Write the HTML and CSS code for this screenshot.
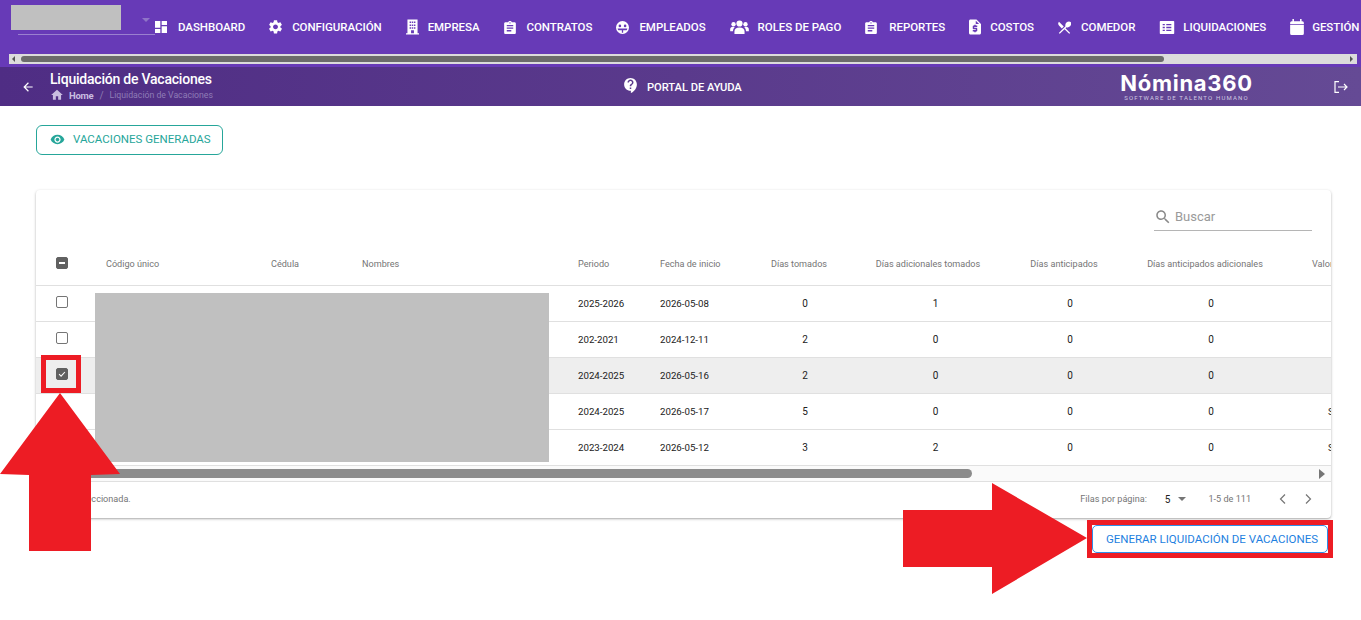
FILE: index.html
```html
<!DOCTYPE html>
<html lang="es">
<head>
<meta charset="utf-8">
<title>Liquidación de Vacaciones</title>
<link rel="stylesheet" href="styles.css">
</head>
<body>
<header class="topbar">
  <div class="topnav">
    <div class="company-select"><span class="select-caret"></span></div>
    <a class="nav-item"><svg class="nav-icon i-dash" viewBox="3 3 18 18"><path d="M3 13h8V3H3v10zm0 8h8v-6H3v6zm10 0h8V11h-8v10zm0-18v6h8V3h-8z"/></svg>DASHBOARD</a>
    <a class="nav-item"><svg class="nav-icon i-gear" viewBox="2.500 2 19 20"><path d="M19.140 12.940c.04-.3.06-.61.06-.94 0-.32-.02-.64-.07-.94l2.030-1.580c.18-.14.23-.41.12-.61l-1.920-3.320c-.12-.22-.37-.29-.59-.22l-2.390.96c-.5-.38-1.030-.7-1.620-.94l-.36-2.540c-.04-.24-.24-.41-.48-.41h-3.840c-.24 0-.43.17-.47.41l-.36 2.540c-.59.24-1.130.57-1.620.94l-2.390-.96c-.22-.08-.47 0-.59.22L2.740 8.870c-.12.21-.08.47.12.61l2.030 1.580c-.05.3-.09.63-.09.94s.02.64.07.94l-2.030 1.580c-.18.14-.23.41-.12.61l1.920 3.320c.12.22.37.29.59.22l2.390-.96c.5.38 1.030.7 1.620.94l.36 2.540c.05.24.24.41.48.41h3.840c.24 0 .44-.17.47-.41l.36-2.540c.59-.24 1.130-.56 1.620-.94l2.390.96c.22.08.47 0 .59-.22l1.920-3.320c.12-.22.07-.47-.12-.61l-2.010-1.580zM12 15.600c-1.980 0-3.600-1.620-3.600-3.600s1.620-3.600 3.600-3.600 3.600 1.620 3.600 3.600-1.620 3.600-3.600 3.600z"/></svg>CONFIGURACIÓN</a>
    <a class="nav-item"><svg class="nav-icon i-build" viewBox="3 2 18 21"><path fill-rule="evenodd" d="M5 2h14v19h2v2H3v-2h2zM8 5v2h2V5zm3 0v2h2V5zm3 0v2h2V5zM8 9v2h2V9zm3 0v2h2V9zm3 0v2h2V9zM8 13v2h2v-2zm3 0v2h2v-2zm3 0v2h2v-2zm-4 4v4h4v-4z"/></svg>EMPRESA</a>
    <a class="nav-item"><svg class="nav-icon i-clip" viewBox="3 1 18 20"><path d="M19 3h-4.180C14.400 1.840 13.300 1 12 1c-1.300 0-2.400.84-2.820 2H5c-1.100 0-2 .9-2 2v14c0 1.100.9 2 2 2h14c1.100 0 2-.9 2-2V5c0-1.100-.9-2-2-2zm-7 0c.55 0 1 .45 1 1s-.45 1-1 1-1-.45-1-1 .45-1 1-1zm2 14H7v-2h7v2zm3-4H7v-2h10v2zm0-4H7V7h10v2z"/></svg>CONTRATOS</a>
    <a class="nav-item"><svg class="nav-icon i-face" viewBox="2 2 20 20"><path fill-rule="evenodd" d="M12 2a10 10 0 100 20 10 10 0 000-20zM8 7.500a2 2 0 110 4 2 2 0 010-4zm8 0a2 2 0 110 4 2 2 0 010-4zM4.500 13.500h15c-.2 1-.6 1.800-1.200 2.600H13v4h-2v-4H5.700c-.6-.8-1-1.600-1.200-2.600z"/></svg>EMPLEADOS</a>
    <a class="nav-item"><svg class="nav-icon i-group" viewBox="0 2 24 18"><circle cx="12" cy="6.500" r="4"/><circle cx="4.300" cy="7.500" r="2.800"/><circle cx="19.700" cy="7.500" r="2.800"/><path d="M5.500 20v-3.500c0-3 2.500-5 6.500-5s6.500 2 6.500 5V20zM0 16.500v-2.500c0-2 1.400-3.300 3.500-3.300 1 0 1.800.3 2.400.7-1.300 1-2.100 2.400-2.300 5.100zM24 16.500v-2.500c0-2-1.400-3.300-3.500-3.300-1 0-1.800.3-2.400.7 1.300 1 2.100 2.400 2.300 5.100z"/></svg>ROLES DE PAGO</a>
    <a class="nav-item"><svg class="nav-icon i-clip i-clip-wide" viewBox="3 1 18 20"><path d="M19 3h-4.180C14.400 1.840 13.300 1 12 1c-1.300 0-2.400.84-2.820 2H5c-1.100 0-2 .9-2 2v14c0 1.100.9 2 2 2h14c1.100 0 2-.9 2-2V5c0-1.100-.9-2-2-2zm-7 0c.55 0 1 .45 1 1s-.45 1-1 1-1-.45-1-1 .45-1 1-1zm2 14H7v-2h7v2zm3-4H7v-2h10v2zm0-4H7V7h10v2z"/></svg>REPORTES</a>
    <a class="nav-item"><svg class="nav-icon i-cost" viewBox="4 2 16 20"><path d="M14 2H6c-1.100 0-1.990.9-1.990 2L4 20c0 1.100.89 2 1.990 2H18c1.100 0 2-.9 2-2V8l-6-6zm1 10h-4v1h3c.55 0 1 .45 1 1v3c0 .55-.45 1-1 1h-1v1h-2v-1H9v-2h4v-1h-3c-.55 0-1-.45-1-1v-3c0-.55.45-1 1-1h1V9h2v1h2v2zm-2-4V3.500L17.500 8H13z"/></svg>COSTOS</a>
    <a class="nav-item"><svg class="nav-icon i-food" viewBox="2.500 2.500 19 19"><path d="M8.100 13.340l2.830-2.830L3.910 3.500c-1.560 1.560-1.560 4.090 0 5.660l4.190 4.180zm6.780-1.810c1.530.71 3.680.21 5.270-1.380 1.910-1.910 2.280-4.650.81-6.120-1.460-1.460-4.200-1.100-6.120.81-1.590 1.590-2.090 3.740-1.380 5.270L3.700 19.870l1.410 1.410L12 14.410l6.880 6.880 1.410-1.410L13.410 13l1.470-1.470z"/></svg>COMEDOR</a>
    <a class="nav-item"><svg class="nav-icon i-list" viewBox="2 3 20 18"><path d="M21 3H3a1 1 0 00-1 1v16a1 1 0 001 1h18a1 1 0 001-1V4a1 1 0 00-1-1zM9 17H6v-2h3zm0-4H6v-2h3zm0-4H6V7h3zm9 8h-7v-2h7zm0-4h-7v-2h7zm0-4h-7V7h7z"/></svg>LIQUIDACIONES</a>
    <a class="nav-item"><svg class="nav-icon i-cal" viewBox="3 1 18 21"><path d="M6 1h2v3h8V1h2v3h1a2 2 0 012 2v2H3V6a2 2 0 012-2h1zM3 9h18v11a2 2 0 01-2 2H5a2 2 0 01-2-2z"/></svg>GESTIÓN DE TURNOS</a>
  </div>
  <div class="top-scroll">
    <span class="arrow-left"></span>
    <span class="top-thumb"></span>
    <span class="arrow-right"></span>
  </div>
</header>

<section class="pagebar">
  <div class="back"><svg class="back-icon" viewBox="0 0 24 24"><path d="M20 11H7.830l5.590-5.590L12 4l-8 8 8 8 1.410-1.410L7.830 13H20v-2z"/></svg></div>
  <div class="title-block">
    <h1 class="page-title">Liquidación de Vacaciones</h1>
    <div class="crumbs">
      <svg class="home-icon" viewBox="0 0 24 24"><path d="M10 20v-6h4v6h5v-8h3L12 3 2 12h3v8z"/></svg>
      <span class="crumb-home">Home</span><span class="crumb-sep">/</span><span class="crumb-current">Liquidación de Vacaciones</span>
    </div>
  </div>
  <a class="help-link"><svg class="help-icon" viewBox="3 2 17 20"><path d="M11.500 2C6.810 2 3 5.810 3 10.500S6.810 19 11.500 19h.5v3c4.860-2.340 8-7 8-11.500C20 5.810 16.190 2 11.500 2zm1 14.500h-2v-2h2v2zm0-3.500h-2c0-3.250 3-3 3-5 0-1.100-.9-2-2-2s-2 .9-2 2h-2c0-2.210 1.790-4 4-4s4 1.790 4 4c0 2.500-3 2.750-3 5z"/></svg>PORTAL DE AYUDA</a>
  <div class="brand-zone">
    <div class="brand"><div class="brand-name">Nómina360</div><div class="brand-sub">SOFTWARE DE TALENTO HUMANO</div></div>
    <svg class="exit-icon" viewBox="0 0 14 12"><path d="M5 .7H1v10.600h4M4 6h9M10 3l3 3-3 3"/></svg>
  </div>
</section>

<main class="content">
  <a class="btn-generated"><svg class="eye-icon" viewBox="0 0 24 24"><path d="M12 4.500C7 4.500 2.730 7.610 1 12c1.730 4.390 6 7.500 11 7.500s9.270-3.110 11-7.500c-1.730-4.390-6-7.500-11-7.500zM12 17c-2.760 0-5-2.240-5-5s2.240-5 5-5 5 2.240 5 5-2.240 5-5 5zm0-8c-1.660 0-3 1.340-3 3s1.340 3 3 3 3-1.340 3-3-1.340-3-3-3z"/></svg>VACACIONES GENERADAS</a>

  <div class="card">
    <div class="toolbar">
      <div class="search">
        <svg class="search-icon" viewBox="0 0 24 24"><path d="M15.500 14h-.79l-.28-.27C15.410 12.590 16 11.110 16 9.500 16 5.910 13.090 3 9.500 3S3 5.910 3 9.500 5.910 16 9.500 16c1.610 0 3.090-.59 4.230-1.570l.27.28v.79l5 4.990L20.490 19l-4.990-5zm-6 0C7.010 14 5 11.990 5 9.500S7.010 5 9.500 5 14 7.010 14 9.500 11.990 14 9.500 14z"/></svg>
        <span class="search-text">Buscar</span>
      </div>
    </div>
    <div class="table-clip">
      <table class="grid">
        <colgroup>
          <col class="c-check"><col class="c-code"><col class="c-ced"><col class="c-name"><col class="c-per"><col class="c-date"><col class="c-d1"><col class="c-d2"><col class="c-d3"><col class="c-d4"><col class="c-val">
        </colgroup>
        <thead>
          <tr>
            <th class="cell-check"><span class="box box-filled"><span class="minus"></span></span></th>
            <th>Código único</th><th>Cédula</th><th>Nombres</th><th>Periodo</th><th>Fecha de inicio</th>
            <th class="num">Días tomados</th><th class="num th-wide">Días adicionales tomados</th><th class="num">Días anticipados</th><th class="num">Días anticipados adicionales</th><th class="th-val">Valor</th>
          </tr>
        </thead>
        <tbody>
          <tr><td class="cell-check"><span class="box"></span></td><td></td><td></td><td></td><td>2025-2026</td><td>2026-05-08</td><td class="num">0</td><td class="num">1</td><td class="num">0</td><td class="num">0</td><td class="val"></td></tr>
          <tr><td class="cell-check"><span class="box"></span></td><td></td><td></td><td></td><td>202-2021</td><td>2024-12-11</td><td class="num">2</td><td class="num">0</td><td class="num">0</td><td class="num">0</td><td class="val"></td></tr>
          <tr class="selected"><td class="cell-check"><span class="box box-filled"><svg class="tick" viewBox="0 0 12 12"><path d="M2.500 6.200l2.400 2.400 4.600-5"/></svg></span></td><td></td><td></td><td></td><td>2024-2025</td><td>2026-05-16</td><td class="num">2</td><td class="num">0</td><td class="num">0</td><td class="num">0</td><td class="val"></td></tr>
          <tr><td class="cell-check"></td><td></td><td></td><td></td><td>2024-2025</td><td>2026-05-17</td><td class="num">5</td><td class="num">0</td><td class="num">0</td><td class="num">0</td><td class="val">S/ 0,00</td></tr>
          <tr><td class="cell-check"></td><td></td><td></td><td></td><td>2023-2024</td><td>2026-05-12</td><td class="num">3</td><td class="num">2</td><td class="num">0</td><td class="num">0</td><td class="val">S/ 0,00</td></tr>
        </tbody>
      </table>
    </div>
    <div class="table-scroll">
      <span class="table-thumb"></span>
      <span class="table-arrow"></span>
    </div>
    <div class="pager">
      <span class="selected-count">1 fila seleccionada.</span>
      <span class="rows-label">Filas por página:</span>
      <span class="rows-value">5</span>
      <span class="rows-caret"></span>
      <span class="range">1-5 de 111</span>
      <svg class="chev chev-prev" viewBox="0 0 10 12"><path d="M7 1.500L2.500 6 7 10.500"/></svg>
      <svg class="chev" viewBox="0 0 10 12"><path d="M3 1.500L7.500 6 3 10.500"/></svg>
    </div>
  </div>

  <div class="actions"><a class="btn-generate">GENERAR LIQUIDACIÓN DE VACACIONES</a></div>
</main>

<div class="redact redact-logo"></div>
<div class="redact redact-table"></div>
<svg class="annotations" viewBox="0 0 1361 620">
  <rect class="mark-box" x="43.500" y="357.500" width="35" height="33"/>
  <rect class="mark-box" x="1089.500" y="522.500" width="241" height="33"/>
  <polygon class="mark-arrow" points="60,393 120,474 91,475 91,551 29,551 29,475 0,474"/>
  <polygon class="mark-arrow" points="903,510 992,510 992,483 1087,538 992,594 992,567 903,567"/>
</svg>
</body>
</html>
```

FILE: styles.css
```css
* { box-sizing: border-box; }
html, body { margin: 0; padding: 0; height: 620px; overflow: hidden; background: #fff; }
body { font-family: Roboto, "Liberation Sans", sans-serif; color: #212121; position: relative; }

/* top nav */
.topbar { height: 67px; background: #673ab7; overflow: hidden; }
.topnav { height: 54px; display: flex; align-items: center; white-space: nowrap; overflow: hidden; }
.company-select { flex: 0 0 137px; height: 35px; margin-left: 18px; border-bottom: 1px solid #9a80cf; position: relative; align-self: flex-start; }
.select-caret { position: absolute; right: 5px; top: 18px; border: 4.500px solid transparent; border-top: 4.500px solid #8f74c8; border-bottom: 0; }
.nav-item { display: flex; align-items: center; flex: none; margin-right: 24px; font-size: 11.500px; font-weight: 500; color: #fff; letter-spacing: -.05px; }
.nav-icon { fill: #fff; flex: none; width: 13px; height: 13px; margin-right: 10px; }
.i-dash { width: 12px; height: 12px; margin-right: 11px; }
.i-gear { width: 13px; height: 13.700px; }
.i-build { width: 13px; height: 16px; margin-right: 9px; }
.i-clip { width: 12px; height: 13px; margin-right: 11px; }
.i-clip-wide { margin-right: 12px; }
.i-group { width: 19px; height: 14px; margin-right: 9px; }
.i-cost { width: 12px; height: 16px; margin-right: 9px; }
.i-list { width: 16px; height: 13px; margin-right: 8px; }
.i-cal { width: 14px; height: 16px; margin-right: 8px; }
.top-scroll { height: 10px; margin: 0 4px 0 9px; background: #dcdcdc; display: flex; align-items: center; padding: 0 4px 0 3px; }
.arrow-left { border: 3px solid transparent; border-right: 3px solid #555; border-left: 0; margin-right: 6px; }
.top-thumb { width: 1143px; height: 6px; background: #6b6b6b; border-radius: 3px; }
.arrow-right { margin-left: auto; border: 3px solid transparent; border-left: 3px solid #555; border-right: 0; }

/* page bar */
.pagebar { height: 39px; background: linear-gradient(90deg, #4f2d84 0%, #5a3a8c 50%, #654a95 100%); color: #fff; display: grid; grid-template-columns: 50px 574px 496px 1fr; align-items: center; }
.back { display: flex; justify-content: flex-end; padding-right: 15px; padding-top: 1px; }
.back-icon { width: 14px; height: 14px; fill: #fff; }
.title-block { display: flex; flex-direction: column; gap: 1px; padding-bottom: 1px; }
.page-title { margin: 0; font-size: 14px; line-height: 17px; font-weight: 500; color: #fff; letter-spacing: -.22px; }
.crumbs { display: flex; align-items: center; height: 12px; font-size: 8.700px; color: #9d8bbf; }
.home-icon { width: 14px; height: 14px; fill: #c9bde0; margin-right: 5px; }
.crumb-home { font-weight: 700; color: #c9bde0; font-size: 9.500px; letter-spacing: -.25px; }
.crumb-sep { margin: 0 6px; font-size: 10px; color: #8e7cb3; }
.crumb-current { color: #8f7cb6; }
.help-link { display: flex; align-items: center; gap: 10px; font-size: 11.200px; font-weight: 500; color: #fff; letter-spacing: -.05px; padding-top: 1px; }
.help-icon { width: 13px; height: 15px; fill: #fff; margin-top: -3px; }
.brand-zone { display: flex; justify-content: space-between; align-items: center; padding-right: 13px; }
.brand { width: 133px; color: #fff; text-align: center; }
.brand-name { font-family: Inter, "Open Sans", sans-serif; font-weight: 700; font-size: 22px; line-height: 22px; letter-spacing: .7px; white-space: nowrap; }
.brand-sub { font-size: 6px; line-height: 8px; color: #cfc6e0; letter-spacing: 1.170px; white-space: nowrap; }
.exit-icon { width: 14px; height: 12px; fill: none; stroke: #fff; stroke-width: 1.200; }

/* content */
.content { padding: 19px 30px 0 36px; }
.btn-generated { display: inline-flex; align-items: center; gap: 8px; height: 30px; width: 187px; padding: 0 0 2px 13px; border: 1px solid #26a69a; border-radius: 6px; font-size: 11.500px; color: #26a69a; vertical-align: top; }
.eye-icon { width: 15px; height: 15px; fill: #26a69a; flex: none; }
.card { margin-top: 35px; height: 328px; background: #fff; border-radius: 4px; box-shadow: 0 1px 3px rgba(0,0,0,.28), 0 1px 1px rgba(0,0,0,.08); overflow: hidden; }
.toolbar { height: 52px; display: flex; justify-content: flex-end; padding: 10px 19px 0 0; }
.search { width: 158px; height: 31px; display: flex; align-items: center; gap: 3px; padding: 3px 0 0 0; border-bottom: 1px solid #b5b5b5; }
.search-icon { width: 18px; height: 18px; fill: #8a8a8a; }
.search-text { font-size: 13px; color: #9a9a9a; }

.table-clip { width: 1295px; height: 224px; overflow: hidden; }
.grid { border-collapse: collapse; table-layout: fixed; width: 1346px; font-size: 9.700px; }
.c-check { width: 54px; } .c-code { width: 165px; } .c-ced { width: 91px; } .c-name { width: 216px; } .c-per { width: 82px; } .c-date { width: 111px; }
.c-d1 { width: 100px; } .c-d2 { width: 161px; } .c-d3 { width: 108px; } .c-d4 { width: 174px; } .c-val { width: 84px; }
.grid th { height: 43px; padding: 2px 0 0 16px; text-align: left; font-weight: 400; color: #757575; font-size: 9.100px; white-space: nowrap; border-bottom: 1px solid #e0e0e0; overflow: hidden; }
.grid td { height: 36px; padding: 0 0 0 16px; color: #212121; white-space: nowrap; border-bottom: 1px solid #e0e0e0; overflow: hidden; }
.grid th.num { padding: 2px 12px 0 0; text-align: center; }
.grid th.th-wide { padding-right: 15px; }
.grid th.th-val { padding-left: 14px; }
.grid td.num { padding: 0; text-align: center; font-size: 10px; }
.grid td.val { padding-left: 30px; }
.grid .cell-check { padding: 0 0 3px 20px; }
.grid th.cell-check { padding-bottom: 0; }
.selected td { background: #eee; }

.box { display: flex; align-items: center; justify-content: center; width: 12px; height: 12px; border: 1.500px solid #757575; border-radius: 2px; background: transparent; }
.box-filled { background: #616161; border-color: #616161; }
.minus { width: 6px; height: 2px; background: #fff; }
.tick { width: 10px; height: 10px; fill: none; stroke: #fff; stroke-width: 1.300; flex: none; }

.table-scroll { height: 16px; background: #fafafa; border-bottom: 1px solid #e0e0e0; display: flex; align-items: center; padding: 0 6px 0 10px; }
.table-thumb { width: 926px; height: 9px; background: #8c8c8c; border-radius: 5px; }
.table-arrow { margin-left: auto; border: 5px solid transparent; border-left: 6px solid #757575; border-right: 0; }

.pager { height: 36px; display: flex; align-items: center; padding: 0 18px 2px 17px; font-size: 9.100px; color: #757575; }
.selected-count { margin-right: auto; }
.rows-value { margin-left: 18px; color: #212121; font-size: 10px; }
.rows-caret { margin-left: 8px; border: 4px solid transparent; border-top: 4.500px solid #757575; border-bottom: 0; }
.range { margin-left: 22px; }
.chev { width: 10px; height: 12px; fill: none; stroke: #757575; stroke-width: 1.200; margin-left: 15px; }
.chev-prev { margin-left: 27px; }

.actions { display: flex; justify-content: flex-end; margin-top: 7px; padding-right: 3px; }
.btn-generate { display: flex; align-items: center; justify-content: center; width: 236px; height: 28px; padding-left: 4px; background: #fff; border: 1px solid #2f8fe8; border-radius: 5px; font-size: 11.500px; color: #1e7fe0; white-space: nowrap; }

/* overlays */
.redact { position: absolute; background: #c0c0c0; }
.redact-logo { left: 11px; top: 5px; width: 110px; height: 25px; }
.redact-table { left: 95px; top: 293px; width: 454px; height: 169px; }
.annotations { position: absolute; left: 0; top: 0; width: 1361px; height: 620px; pointer-events: none; }
.mark-box { fill: none; stroke: #ed1c24; stroke-width: 5; }
.mark-arrow { fill: #ed1c24; }
```
